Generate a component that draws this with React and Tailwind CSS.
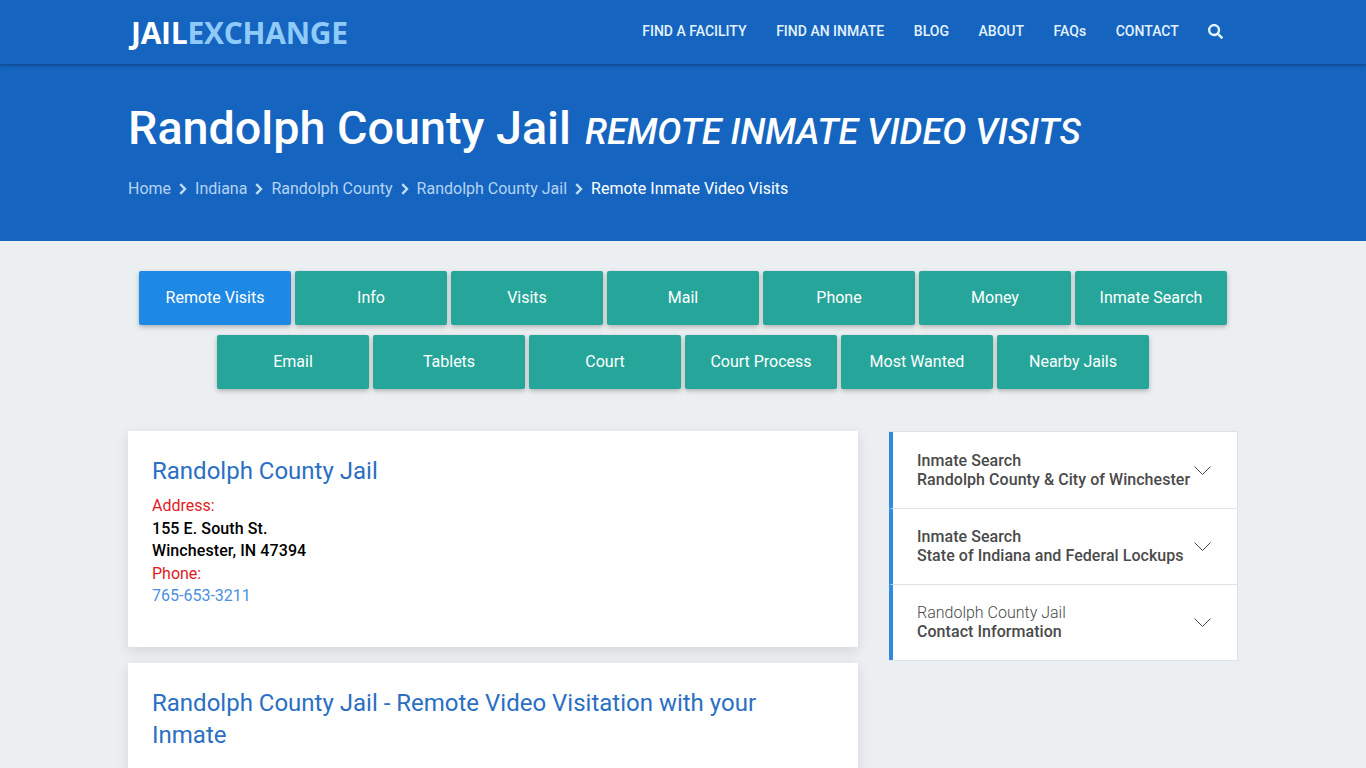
import React from "react";
import { FaSearch } from "react-icons/fa";

const nav = ["FIND A FACILITY", "FIND AN INMATE", "BLOG", "ABOUT", "FAQs", "CONTACT"];
const crumbs = ["Home", "Indiana", "Randolph County", "Randolph County Jail"];
const row1 = ["Remote Visits", "Info", "Visits", "Mail", "Phone", "Money", "Inmate Search"];
const row2 = ["Email", "Tablets", "Court", "Court Process", "Most Wanted", "Nearby Jails"];

function Btn({ label, active }) {
  return (
    <div className={`w-[152px] h-[54px] flex items-center justify-center rounded-[2px] text-white text-[16px] shadow-[0_2px_5px_rgba(0,0,0,0.26)] ${active ? "bg-[#1e88e5]" : "bg-[#26a69a]"}`}>
      {label}
    </div>
  );
}

function Side({ a, b, light }) {
  return (
    <div className="h-[76px] flex items-center justify-between bg-white border-l-4 border-l-[#2f8ae0] pl-6 pr-[26px] text-[16px] leading-[19px] text-[#4a4a4a] border-t border-t-[#dee2e6] first:border-t-0 not-first:pb-[1px] tracking-[0.05px]">
      <div>
        <div className={light ? "font-light tracking-normal" : "font-medium"}>{a}</div>
        <div className="font-medium whitespace-nowrap">{b}</div>
      </div>
      <svg width="17" height="9" viewBox="0 0 17 9" fill="none" stroke="#4a4a4a" strokeWidth="1" className="shrink-0">
        <path d="M0.5 0.5L8.5 8.5L16.5 0.5" />
      </svg>
    </div>
  );
}

export default function App() {
  return (
    <div className="h-[768px] overflow-hidden bg-[#eceff1] font-['Roboto',sans-serif]">
      <header className="h-[65px] bg-[#1565c0] border-b border-b-[#0f4f9a] shadow-[0_1px_3px_rgba(0,0,0,0.25)] relative z-10">
        <div className="w-[1110px] mx-auto h-full flex items-center justify-between">
          <div className="font-['Open_Sans',sans-serif] font-bold text-[30px] leading-none tracking-[-0.27px] ml-[3px] mt-[1px]">
            <span className="text-white">JAIL</span>
            <span className="text-[#90caf9]">EXCHANGE</span>
          </div>
          <nav className="flex items-center text-[14px] font-medium text-[#e3f2fd] mr-[14.6px] -mt-[2px]">
            {nav.map((n) => (
              <span key={n} className="mr-[29.6px] last:mr-[29px]">{n}</span>
            ))}
            <FaSearch size={15} className="text-[#e3f2fd]" />
          </nav>
        </div>
      </header>

      <section className="h-[176px] bg-[#1565c0]">
        <div className="w-[1110px] mx-auto">
          <h1 className="pt-[33px] h-[90px] leading-[60px] text-white whitespace-nowrap flex items-baseline">
            <span className="text-[46.7px] font-medium">Randolph County Jail</span>
            <span className="text-[36.1px] font-medium italic ml-[14px]">REMOTE INMATE VIDEO VISITS</span>
          </h1>
          <div className="mt-[22px] flex items-center text-[16px] leading-[24px]">
            {crumbs.map((c) => (
              <React.Fragment key={c}>
                <span className="text-[#b5d3f3]">{c}</span>
                <svg width="8" height="12" viewBox="0 0 8 12" fill="none" stroke="#c3dcf6" strokeWidth="2.4" className="mx-[8px] shrink-0">
                  <path d="M1.3 1.2L6 6L1.3 10.8" />
                </svg>
              </React.Fragment>
            ))}
            <span className="text-white">Remote Inmate Video Visits</span>
          </div>
        </div>
      </section>

      <section className="pt-[30px] flex flex-col items-center gap-[10px]">
        <div className="flex gap-[4px]">
          {row1.map((l, i) => <Btn key={l} label={l} active={i === 0} />)}
        </div>
        <div className="flex gap-[4px]">
          {row2.map((l) => <Btn key={l} label={l} />)}
        </div>
      </section>

      <main className="w-[1110px] mx-auto mt-[42px] flex items-start justify-between">
        <div className="w-[730px] flex flex-col gap-[16px]">
          <div className="bg-white h-[216px] px-6 pt-[22px] shadow-[0_4px_12px_rgba(0,0,0,0.1)]">
            <h2 className="text-[24px] leading-[36px] text-[#2a6fc4]">Randolph County Jail</h2>
            <div className="mt-[6px] text-[16px] leading-[22.5px]">
              <div className="text-[#e01b24]">Address:</div>
              <div className="font-medium text-black tracking-[0.09px]">155 E. South St.</div>
              <div className="font-medium text-black tracking-[0.09px]">Winchester, IN 47394</div>
              <div className="text-[#e01b24]">Phone:</div>
              <div className="text-[#4a8fe0]">765-653-3211</div>
            </div>
          </div>
          <div className="bg-white h-[200px] px-6 pt-[24px] shadow-[0_4px_12px_rgba(0,0,0,0.1)]">
            <h2 className="text-[24px] leading-[32px] text-[#2a6fc4]">Randolph County Jail - Remote Video Visitation with your Inmate</h2>
          </div>
        </div>
        <aside className="w-[349px] border border-[#dee2e6] border-l-0 flex flex-col">
          <Side a="Inmate Search" b="Randolph County & City of Winchester" />
          <Side a="Inmate Search" b="State of Indiana and Federal Lockups" />
          <Side a="Randolph County Jail" b="Contact Information" light />
        </aside>
      </main>
    </div>
  );
}
